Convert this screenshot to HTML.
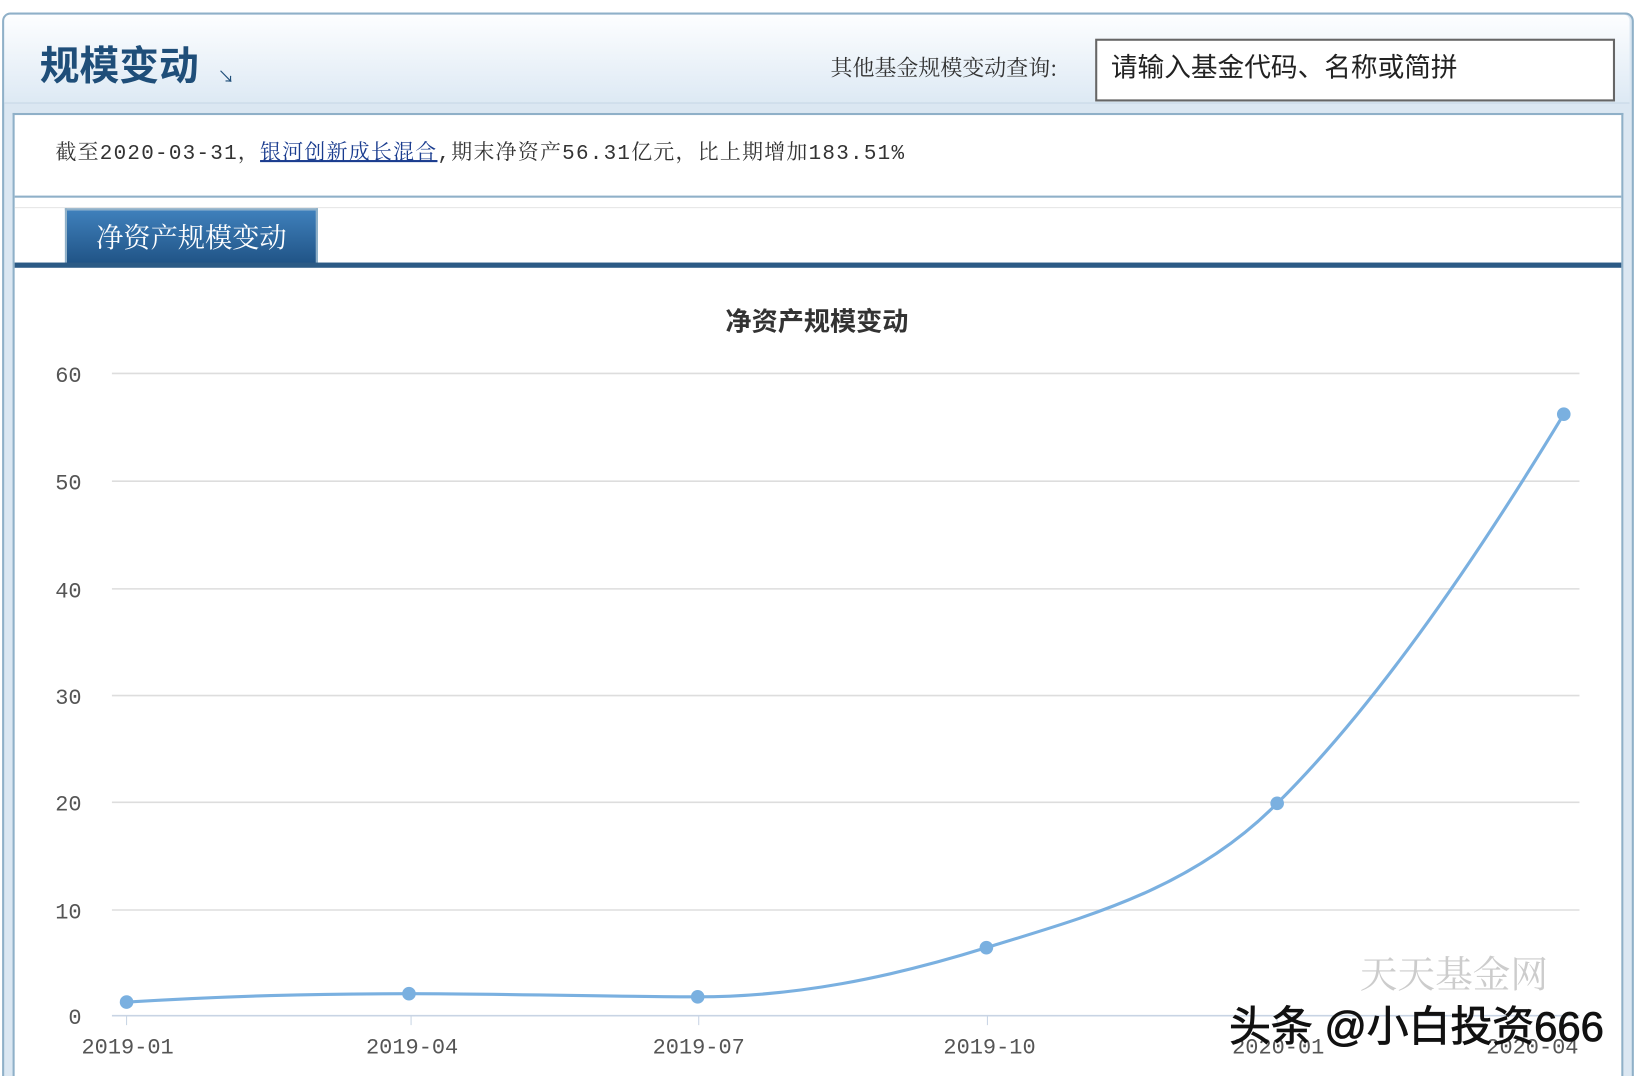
<!DOCTYPE html>
<html><head><meta charset="utf-8">
<style>
html,body{margin:0;padding:0;background:#fff;overflow:hidden;width:1636px;height:1076px}
#w{position:absolute;left:0;top:0;width:1564px;height:1029px;overflow:hidden;transform:scale(1.046);transform-origin:0 0;font-family:"Liberation Sans","Noto Sans CJK SC",sans-serif}
.abs{position:absolute}
.serif{font-family:"Liberation Mono","Noto Serif CJK SC",serif}
</style></head><body>
<div id="w">
<div class="abs" style="left:2px;top:12px;width:1556px;height:1060px;border:2px solid #8fb0c8;border-radius:8px 8px 0 0;background:#dbe7f2"></div>
<div class="abs" style="left:4px;top:14px;width:1554px;height:84px;border-radius:6px 6px 0 0;background:linear-gradient(#fdfeff,#dde9f4);border-bottom:1px solid #c5d6e5"></div>
<div class="abs" style="left:38px;top:38px;font-size:38px;font-weight:bold;color:#1f4e79;line-height:52px">规模变动</div>
<div class="abs" style="left:208px;top:60px;font-size:16px;color:#1f4e79">↘</div>
<div class="abs" style="left:794px;top:50px;font-size:21px;color:#333;line-height:28px;font-family:'Noto Serif CJK SC',serif">其他基金规模变动查询:</div>
<div class="abs" style="left:1047px;top:37px;width:493px;height:56px;border:2px solid #666;background:#fff"></div>
<div class="abs" style="left:1062px;top:47px;font-size:25.5px;color:#222;line-height:36px">请输入基金代码、名称或简拼</div>
<div class="abs" style="left:12px;top:108px;width:1536px;height:960px;border:2px solid #8fb0c8;border-bottom:none;background:#fff"></div>
<div class="abs serif" style="left:53px;top:133px;font-size:20px;color:#333;line-height:30px;letter-spacing:1.2px;white-space:nowrap">截至2020-03-31，<span style="color:#1a3c8f;text-decoration:underline">银河创新成长混合</span>,期末净资产56.31亿元，比上期增加183.51%</div>
<div class="abs" style="left:14px;top:187px;width:1536px;height:2px;background:#8fb0c8"></div>
<div class="abs" style="left:14px;top:198px;width:1536px;height:1px;background:#e6e6e6"></div>
<div class="abs" style="left:62px;top:199px;width:238px;height:53px;border:2px solid #8fb0c8;border-bottom:none;background:linear-gradient(#3f80bb,#1f5284)"></div>
<div class="abs" style="left:62px;top:208px;width:242px;text-align:center;font-size:26px;color:#fff;line-height:36px;font-family:'Noto Serif CJK SC',serif">净资产规模变动</div>
<div class="abs" style="left:14px;top:251px;width:1536px;height:5px;background:#2b5a85"></div>
<svg class="abs" style="left:0;top:0" width="1564" height="1029">
<g stroke="#ddd" stroke-width="1.5">
<line x1="107" x2="1510" y1="357" y2="357"/><line x1="107" x2="1510" y1="460" y2="460"/><line x1="107" x2="1510" y1="563" y2="563"/><line x1="107" x2="1510" y1="665" y2="665"/><line x1="107" x2="1510" y1="767" y2="767"/><line x1="107" x2="1510" y1="870" y2="870"/></g>
<line x1="107" x2="1510" y1="971" y2="971" stroke="#c8d4e4" stroke-width="1.5"/>
<g stroke="#c8d4e4"><line x1="121" x2="121" y1="971" y2="980"/><line x1="393" x2="393" y1="971" y2="980"/><line x1="668" x2="668" y1="971" y2="980"/><line x1="944" x2="944" y1="971" y2="980"/><line x1="1221" x2="1221" y1="971" y2="980"/><line x1="1495" x2="1495" y1="971" y2="980"/></g>
<text x="781" y="316" text-anchor="middle" font-size="25" font-weight="bold" fill="#333" font-family="Liberation Sans,Noto Sans CJK SC,sans-serif">净资产规模变动</text>
<g font-size="21" fill="#555" text-anchor="end" font-family="Liberation Mono,monospace">
<text x="78" y="365">60</text><text x="78" y="468">50</text><text x="78" y="571">40</text><text x="78" y="673">30</text><text x="78" y="775">20</text><text x="78" y="878">10</text><text x="78" y="979">0</text></g>
<g font-size="21" fill="#555" text-anchor="middle" font-family="Liberation Mono,monospace">
<text x="122" y="1007">2019-01</text><text x="394" y="1007">2019-04</text><text x="668" y="1007">2019-07</text><text x="946" y="1007">2019-10</text><text x="1222" y="1007">2020-01</text><text x="1465" y="1007">2020-04</text></g>
<path d="M121,958 C220,952 300,950 391,950 C480,950 600,953 667,953 C760,953 850,935 943,906 C1040,876 1140,850 1221,768 C1320,670 1420,520 1495,396" fill="none" stroke="#7ab0e0" stroke-width="3"/>
<g fill="#7ab0e0"><circle cx="121" cy="958" r="6.5"/><circle cx="391" cy="950" r="6.5"/><circle cx="667" cy="953" r="6.5"/><circle cx="943" cy="906" r="6.5"/><circle cx="1221" cy="768" r="6.5"/><circle cx="1495" cy="396" r="6.5"/></g>
<text x="1300" y="944" font-size="36" fill="#ccc" font-family="Noto Serif CJK SC,serif">天天基金网</text>
<text x="1175" y="995" font-size="40" fill="#111" stroke="#111" stroke-width="0.8" font-family="Liberation Sans,Noto Sans CJK SC,sans-serif">头条 @小白投资666</text>
</svg>
</div>
</body></html>
